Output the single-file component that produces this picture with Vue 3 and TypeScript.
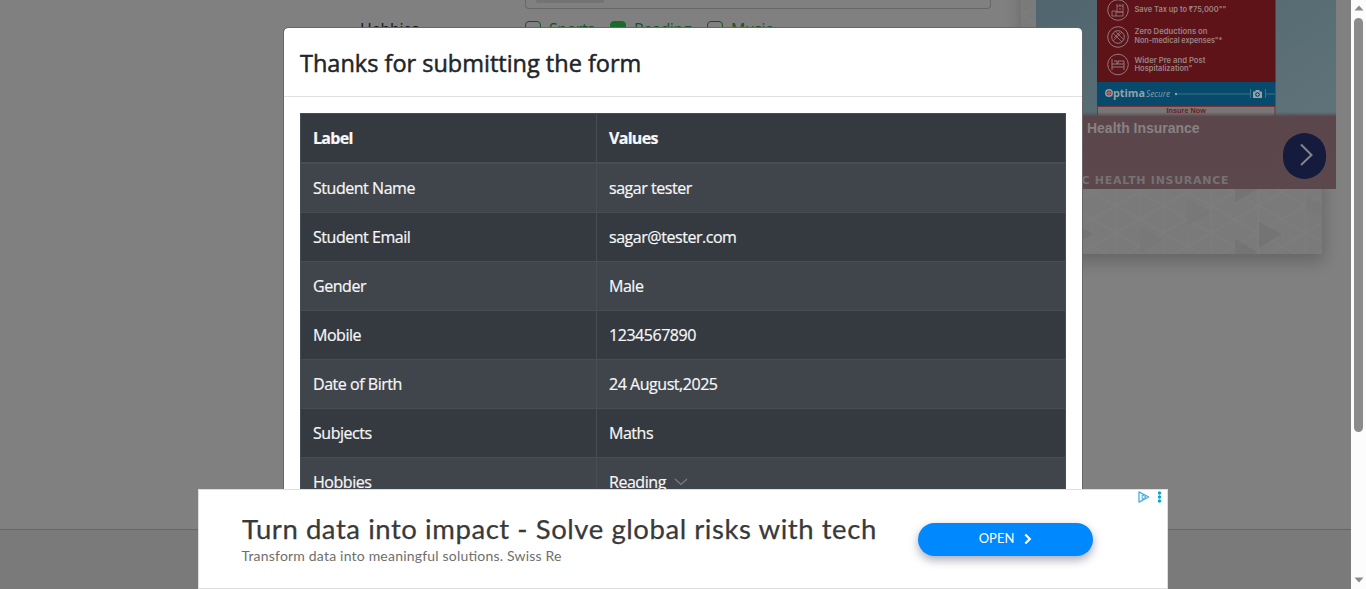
<script setup lang="ts">
interface Row {
  label: string
  value: string
}

const rows: Row[] = [
  { label: 'Student Name', value: 'sagar tester' },
  { label: 'Student Email', value: 'sagar@tester.com' },
  { label: 'Gender', value: 'Male' },
  { label: 'Mobile', value: '1234567890' },
  { label: 'Date of Birth', value: '24 August,2025' },
  { label: 'Subjects', value: 'Maths' },
  { label: 'Hobbies', value: 'Reading' },
]

const hobbies = [
  { name: 'Sports', checked: false },
  { name: 'Reading', checked: true },
  { name: 'Music', checked: false },
]
</script>

<template>
  <div class="screen">
    <div class="page">
      <div class="form">
        <div class="subjects"><span class="chip"></span></div>
        <div class="hobbies">
          <span class="field-label">Hobbies</span>
          <label v-for="h in hobbies" :key="h.name" class="check" :class="h.name.toLowerCase()">
            <span class="box" :class="{ on: h.checked }">
              <svg v-if="h.checked" width="16" height="16" viewBox="0 0 16 16"><path d="M4 10.200l2.600 2.600L12 7" fill="none" stroke="#a5a5a5" stroke-width="2" /></svg>
            </span>
            <span class="name">{{ h.name }}</span>
          </label>
        </div>
      </div>
      <footer class="footer"></footer>
    </div>

    <svg class="side" width="351" height="290" viewBox="1000 0 351 290">
      <defs>
        <linearGradient id="sky" x1="0" y1="0" x2="1" y2="1">
          <stop offset="0" stop-color="#50656e" /><stop offset="1" stop-color="#63767d" />
        </linearGradient>
        <linearGradient id="sheet" x1="0" y1="0" x2="0" y2="1">
          <stop offset="0" stop-color="#5b474b" stop-opacity="0" />
          <stop offset="0.06" stop-color="#5b474b" />
          <stop offset="1" stop-color="#5b484c" />
        </linearGradient>
        <pattern id="tri" x="1045" y="192" width="47.400" height="27.200" patternUnits="userSpaceOnUse">
          <path d="M0 0V27.200M23.700 0V27.200M0 0L47.400 27.200M47.400 0L0 27.200" fill="none" stroke="#7f7f7f" stroke-width="1.200" />
        </pattern>
        <filter id="soft" x="-20%" y="-20%" width="140%" height="140%"><feGaussianBlur stdDeviation="8" /></filter>
      </defs>
      <rect x="1021" y="-20" width="303" height="282" fill="#000" opacity="0.2" filter="url(#soft)" />
      <rect x="1021" y="0" width="301" height="254" fill="#7a7a7a" />
      <rect x="1021" y="0" width="301" height="254" fill="url(#tri)" opacity="0.7" />
      <path d="M1235 189h23l-23 13zM1259 222l22 12-22 14zM1235 239l22 13-4 2h-18zM1082 228l11 6-11 6z" fill="#747474" />
      <path d="M1187 199l24 13-24 14zM1140 227l23 13-23 13zM1306 196l16 9v12l-16-8z" fill="#777" opacity="0.6" />
      <rect x="1036" y="0" width="300" height="189" fill="url(#sky)" />
      <rect x="1097" y="0" width="178.500" height="82" fill="#5e1318" />
      <rect x="1097" y="82" width="178.500" height="24" fill="#074a6b" />
      <rect x="1097.500" y="106.500" width="177.500" height="12" fill="#777" stroke="#7d3338" />
      <g fill="none" stroke="#92797b" stroke-width="1">
        <circle cx="1118" cy="10" r="10.300" />
        <circle cx="1118" cy="37" r="10.300" />
        <circle cx="1118" cy="64.500" r="10.300" />
        <path d="M1112 11h4v5h-4zM1116 12h7v4h-7M1117 6h6v6h-6zM1117 4v2M1120 4v2M1123 4v2M1119 9h2" stroke-width=".9" />
        <circle cx="1118" cy="37" r="6.300" />
        <path d="M1113 33l9 9M1115 31l9 9M1113 41l9-9M1114 38l6-6" stroke-width=".8" />
        <path d="M1112 59v11M1112 67h12v3M1112 64h12v3M1114 61h3v3M1118 64v-3h6v3" />
      </g>
      <g font-family="Inter, sans-serif" font-size="7.600" font-weight="600" fill="#9b8586">
        <text x="1134.500" y="12" textLength="92" lengthAdjust="spacingAndGlyphs">Save Tax up to ₹75,000""</text>
        <text x="1134.500" y="34" textLength="73" lengthAdjust="spacingAndGlyphs">Zero Deductions on</text>
        <text x="1134.500" y="42.700" textLength="88" lengthAdjust="spacingAndGlyphs">Non-medical expenses"*</text>
        <text x="1134.500" y="62.700" textLength="71" lengthAdjust="spacingAndGlyphs">Wider Pre and Post</text>
        <text x="1134.500" y="71" textLength="58" lengthAdjust="spacingAndGlyphs">Hospitalization"</text>
      </g>
      <circle cx="1109" cy="93" r="3.200" fill="#8a2730" stroke="#909da3" stroke-width="1.500" />
      <path d="M1107 93h4M1109 91v4" stroke="#a09a9c" stroke-width=".8" />
      <text x="1113" y="96.800" font-family="Open Sans, sans-serif" font-size="10.500" font-weight="700" fill="#93a2aa" textLength="32" lengthAdjust="spacingAndGlyphs">ptima</text>
      <text x="1146" y="96.800" font-family="Open Sans, sans-serif" font-size="9" font-style="italic" fill="#879ba5" textLength="24" lengthAdjust="spacingAndGlyphs">Secure</text>
      <circle cx="1176" cy="94" r="1.200" fill="#8fa3ac" />
      <path d="M1177 94h73M1250.500 89v9M1265.500 89v9M1266 94h9" stroke="#3f7187" fill="none" />
      <path d="M1253 91.500h2.500v-1.500h4v1.500h2.500v6.500h-9z" fill="#93a2aa" />
      <circle cx="1257.500" cy="94.500" r="2.300" fill="#074a6b" />
      <path d="M1256 94.500h3M1257.500 93v3" stroke="#a5b0b5" stroke-width=".8" />
      <text x="1166.500" y="113.300" font-family="Liberation Sans, sans-serif" font-size="7" font-weight="700" fill="#6b1c22" textLength="39.500" lengthAdjust="spacingAndGlyphs">Insure Now</text>
      <rect x="1036" y="112" width="300" height="77" fill="url(#sheet)" />
      <text x="1087" y="133" font-family="Liberation Sans, sans-serif" font-size="14" font-weight="700" fill="#898185" textLength="112.500">Health Insurance</text>
      <text x="1081.500" y="184" font-family="DejaVu Sans, Open Sans, sans-serif" font-size="11" font-weight="700" fill="#777174" textLength="147">C HEALTH INSURANCE</text>
      <rect x="1283" y="133" width="43" height="46" rx="21.500" fill="#141b3c" />
      <path d="M1301 144.500l10.500 10.500-10.500 10" fill="none" stroke="#85858c" stroke-width="2" />
    </svg>

    <section class="modal">
      <header class="modal-head"><span>Thanks for submitting the form</span></header>
      <div class="modal-body">
        <table>
          <thead>
            <tr><th>Label</th><th>Values</th></tr>
          </thead>
          <tbody>
            <tr v-for="r in rows" :key="r.label">
              <td>{{ r.label }}</td>
              <td>{{ r.value }}</td>
            </tr>
          </tbody>
        </table>
      </div>
    </section>

    <svg class="collapse" width="14" height="8" viewBox="0 0 14 8"><path d="M1 1l6 5.500L13 1" fill="none" stroke="#787b80" stroke-width="1.200" /></svg>

    <aside class="banner">
      <div class="copy">
        <div class="headline">Turn data into impact - Solve global risks with tech</div>
        <svg class="sub" width="330" height="20">
          <text x="0.500" y="13" textLength="320">Transform data into meaningful solutions. Swiss Re</text>
        </svg>
      </div>
      <button class="open">
        <span>OPEN</span>
        <svg width="8" height="12" viewBox="0 0 8 12"><path d="M1.300 1.500L5.800 6 1.300 10.500" fill="none" stroke="#fff" stroke-width="2.200" /></svg>
      </button>
      <svg class="choices" width="26" height="12" viewBox="0 0 26 12">
        <path d="M1 .9v10.200L10.700 6z" fill="#fff" stroke="#45aee5" stroke-width="1.300" stroke-linejoin="round" />
        <path d="M4.200 3.800v4.700L8 6z" fill="none" stroke="#45aee5" stroke-width="1" />
        <g fill="#00abc7"><circle cx="21.500" cy="2" r="1.700" /><circle cx="21.500" cy="6" r="1.700" /><circle cx="21.500" cy="10" r="1.700" /></g>
      </svg>
    </aside>

    <div class="scrollbar">
      <svg width="10" height="6" viewBox="0 0 10 6"><path d="M5 .5L9.500 5.500H.5z" fill="#8b8b8b" /></svg>
      <div class="thumb"></div>
      <svg class="down" width="10" height="6" viewBox="0 0 10 6"><path d="M5 5.500L.5.500h9z" fill="#8b8b8b" /></svg>
    </div>
  </div>
</template>

<style>
html,
body {
  margin: 0;
  overflow: hidden;
}
</style>

<style scoped>
.screen {
  position: relative;
  display: flex;
  width: 1366px;
  height: 589px;
  overflow: hidden;
  background: #808080;
  font-family: "Open Sans", "Noto Sans", sans-serif;
  font-size: 16px;
}
.screen * {
  box-sizing: border-box;
}
.page {
  width: 1351px;
  display: flex;
  flex-direction: column;
}
.form {
  flex: 1;
}
.subjects {
  width: 466px;
  height: 9px;
  margin-left: 525px;
  border: 1px solid #676767;
  border-top: 0;
  border-radius: 0 0 4px 4px;
}
.chip {
  display: block;
  width: 68px;
  height: 3px;
  margin-left: 10px;
  background: #737373;
  border-radius: 0 0 2px 2px;
}
.hobbies {
  display: flex;
  padding: 8px 0 0 360px;
  line-height: 24px;
  color: #121416;
}
.field-label {
  width: 165px;
  letter-spacing: -0.4px;
}
.check {
  display: flex;
  color: #145323;
}
.name {
  letter-spacing: -0.45px;
}
.box {
  width: 16px;
  height: 16px;
  margin: 4px 8px 0 0;
  border: 1px solid #145323;
  border-radius: 4px;
}
.box svg {
  display: block;
  margin: -1px;
}
.box.on {
  background: #196b2c;
  border-color: #196b2c;
}
.sports {
  width: 85px;
}
.reading {
  width: 97px;
}
.footer {
  height: 60px;
  border-top: 1px solid #666;
  background: #7a7a7a;
}
.side {
  position: absolute;
  left: 1000px;
  top: 0;
}
.modal {
  position: absolute;
  left: 283px;
  top: 27px;
  width: 800px;
  height: 620px;
  background: #fff;
  background-clip: padding-box;
  border: 1px solid #666;
  border-radius: 5px;
}
.modal-head {
  height: 69px;
  padding: 0 16px;
  border-bottom: 1px solid #dee2e6;
  color: #212529;
  font-size: 23.500px;
  font-weight: 500;
  line-height: 71px;
  -webkit-text-stroke: 0.5px #212529;
}
.modal-body {
  padding: 16px;
}
table {
  width: 766px;
  table-layout: fixed;
  border-collapse: collapse;
  background: #343a40;
  color: #f7f7f8;
}
th,
td {
  height: 49px;
  padding: 0 12px;
  border: 1px solid #454d55;
  text-align: left;
  line-height: 24px;
  font-weight: 400;
  letter-spacing: -0.46px;
  -webkit-text-stroke: 0.2px #f7f7f8;
}
th {
  height: 50px;
  padding-bottom: 1px;
  border-bottom: 0;
  box-shadow: inset 0 -1px #454d55;
  font-weight: 700;
  letter-spacing: -0.7px;
}
th:first-child {
  width: 296px;
}
tbody tr:nth-child(odd) {
  background: #40454b;
}
.collapse {
  position: absolute;
  left: 674px;
  top: 478px;
}
.banner {
  position: absolute;
  left: 198px;
  top: 489px;
  width: 970px;
  height: 100px;
  display: flex;
  align-items: flex-start;
  background: #fff;
  border: 1px solid #dedede;
}
.copy {
  width: 719px;
  padding: 22px 0 0 42px;
}
.headline {
  height: 36px;
  padding-left: 1px;
  line-height: 33px;
  white-space: nowrap;
  color: #38393a;
  -webkit-text-stroke: 0.25px #38393a;
  font-family: Lato, sans-serif;
  font-size: 27.500px;
  letter-spacing: 0.56px;
}
.sub {
  display: block;
  fill: #6e6e6e;
  font-family: Lato, sans-serif;
  font-size: 14px;
}
.open {
  width: 175px;
  height: 33px;
  margin-top: 33px;
  padding: 0 0 3px;
  display: flex;
  align-items: center;
  justify-content: center;
  gap: 10px;
  border: 0;
  border-radius: 17px;
  background: #0088ff;
  color: #fff;
  font-family: Lato, sans-serif;
  font-size: 13px;
  box-shadow: 0 4px 10px rgba(40, 40, 80, 0.4);
}
.open svg {
  margin-top: 2px;
}
.choices {
  position: absolute;
  right: 3px;
  top: 1px;
}
.scrollbar {
  width: 15px;
  display: flex;
  flex-direction: column;
  align-items: center;
  padding: 5px 0 6px;
  background: #fcfcfc;
}
.thumb {
  width: 9px;
  height: 414px;
  margin-top: 7px;
  border-radius: 5px;
  background: #8b8b8b;
}
.down {
  margin-top: auto;
}
</style>
